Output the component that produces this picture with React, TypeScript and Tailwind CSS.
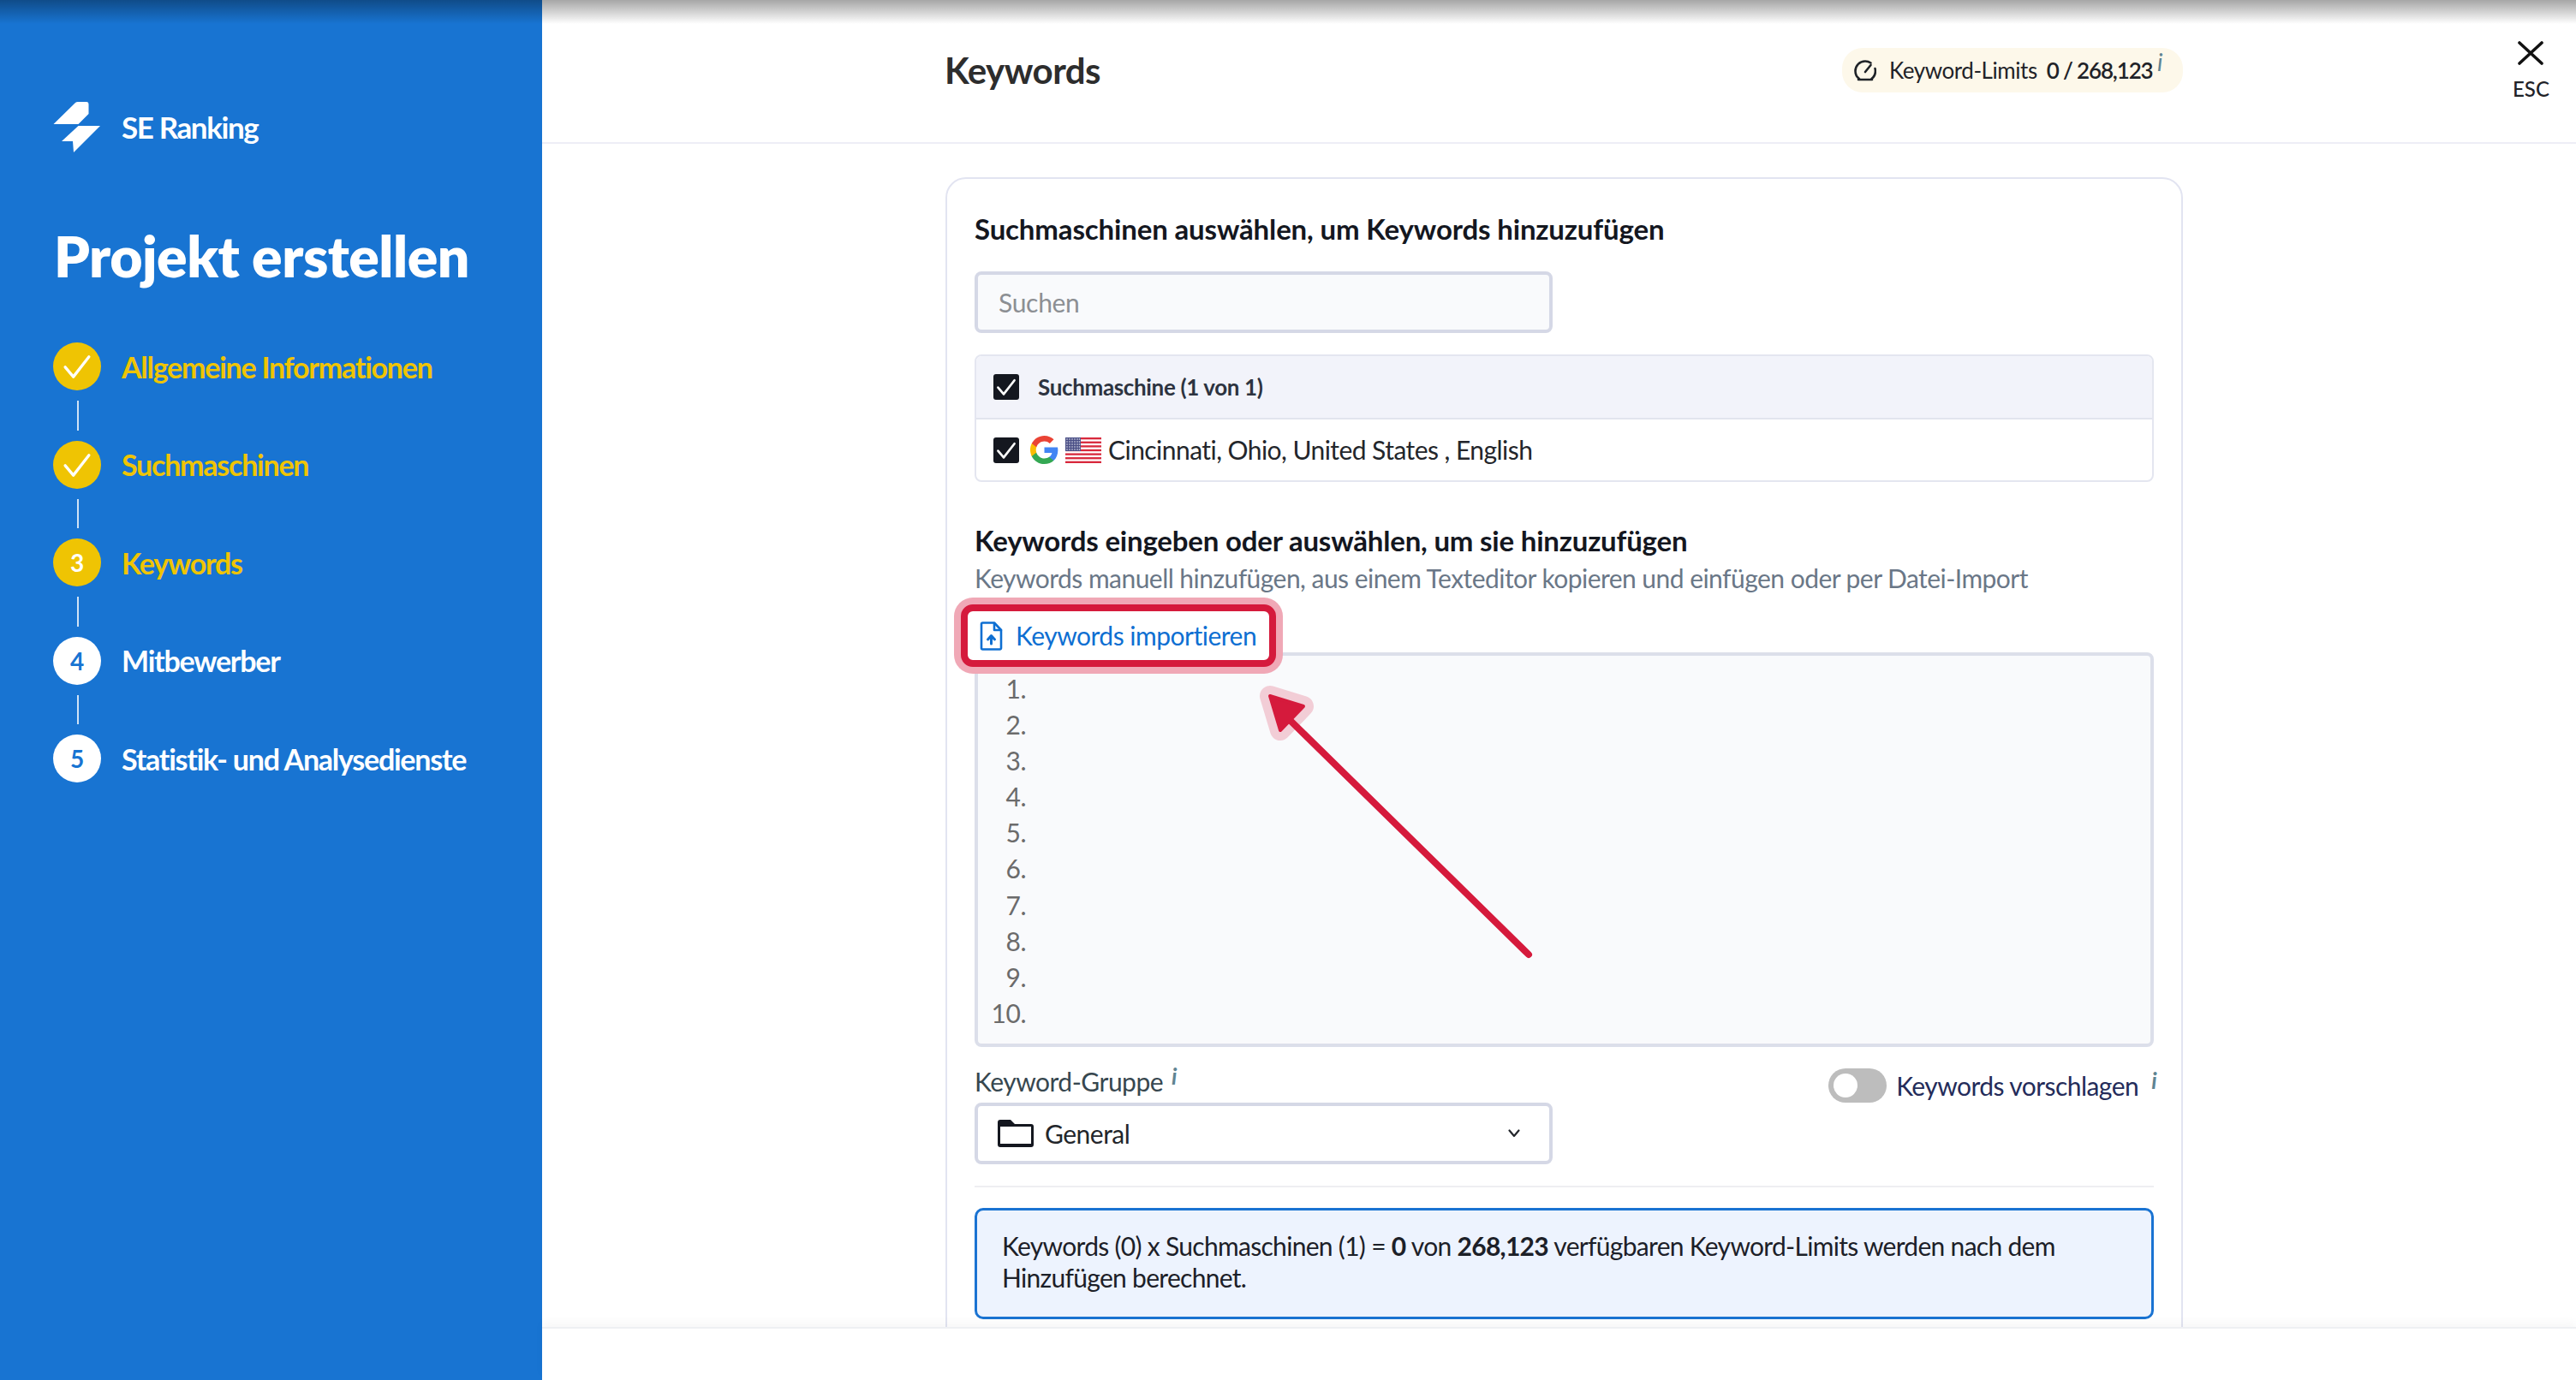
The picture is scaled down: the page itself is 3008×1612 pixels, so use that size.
import React from "react";

const Check = ({ size = 36, stroke = 2.2 }: { size?: number; stroke?: number }) => (
  <svg width={size} height={size} viewBox="0 0 30 30" fill="none" className="shrink-0">
    <path d="M7 15.5l5.5 6.5L23 8.500" stroke="#fff" strokeWidth={stroke} strokeLinecap="round" strokeLinejoin="round" />
  </svg>
);

const Box = () => (
  <span className="flex h-[30px] w-[30px] shrink-0 items-center justify-center rounded-[3px] bg-[#14171f]">
    <Check />
  </span>
);

const Info = ({ className }: { className: string }) => (
  <span className={"italic font-bold text-[#5f8492] " + className}>i</span>
);

const Step = ({ label, state, n, last }: { label: string; state: "done" | "current" | "todo"; n?: number; last?: boolean }) => (
  <div className="flex flex-col items-start">
    <div className="flex h-[56px] items-center gap-[24px]">
      <span
        className={
          "flex h-[56px] w-[56px] items-center justify-center rounded-full text-[28px] font-bold " +
          (state === "todo" ? "bg-white text-[#1874d2]" : "bg-[#efc403] text-white")
        }
      >
        {state === "done" ? <Check size={52} stroke={1.9} /> : n}
      </span>
      <span className={"text-[34px] font-bold tracking-[-1.25px] " + (state === "todo" ? "text-white" : "text-[#efc403]")}>{label}</span>
    </div>
    {!last && <span className="ml-[28px] mt-[12px] mb-[12px] block h-[34.5px] w-[2px] bg-[#cfe2f6]" />}
  </div>
);

const Flag = () => (
  <svg width="42" height="30" viewBox="0 0 42 30" className="shrink-0">
    <rect width="42" height="30" fill="#fff" />
    {[0, 2, 4, 6, 8, 10, 12].map((i) => (
      <rect key={i} y={(i * 30) / 13} width="42" height={30 / 13} fill="#d8283c" />
    ))}
    <rect width="18" height="16" fill="#4a4f86" />
    {[2, 5, 8, 11, 14].map((y) =>
      [2, 5, 8, 11, 14, 16.5].map((x) => <circle key={x + "-" + y} cx={x} cy={y} r="0.8" fill="#e8e8f2" />)
    )}
  </svg>
);

const GLogo = () => (
  <svg width="33" height="33" viewBox="1 1 22 22" className="shrink-0">
    <path fill="#4285F4" d="M22.56 12.25c0-.78-.07-1.53-.2-2.25H12v4.26h5.92c-.26 1.37-1.04 2.53-2.21 3.31v2.77h3.57c2.08-1.92 3.28-4.74 3.28-8.09z" />
    <path fill="#34A853" d="M12 23c2.97 0 5.46-.98 7.28-2.66l-3.57-2.77c-.98.66-2.23 1.06-3.71 1.06-2.86 0-5.29-1.93-6.16-4.53H2.18v2.84C3.99 20.53 7.7 23 12 23z" />
    <path fill="#FBBC05" d="M5.84 14.09c-.22-.66-.35-1.36-.35-2.09s.13-1.43.35-2.09V7.07H2.18C1.43 8.55 1 10.22 1 12s.43 3.45 1.18 4.93l2.85-2.22.81-.62z" />
    <path fill="#EA4335" d="M12 5.38c1.62 0 3.06.56 4.21 1.64l3.15-3.15C17.45 2.09 14.97 1 12 1 7.7 1 3.99 3.47 2.18 7.07l3.66 2.84c.87-2.6 3.3-4.53 6.16-4.53z" />
  </svg>
);

export default function App() {
  return (
    <div className="relative flex h-[1612px] w-[3008px] overflow-hidden bg-white font-['Lato',sans-serif]">
      {/* sidebar */}
      <aside className="flex h-full w-[633px] shrink-0 flex-col bg-[#1874d2] pl-[62px] pt-[118px]">
        <div className="flex h-[60px] items-center gap-[24px]">
          <svg width="56" height="60" viewBox="62 118 56 60" fill="#fff">
            <path d="M62.5 145 L88 120 Q89 119 91 119 L101 119 Q103.5 119 103.5 122 L103.5 133 L91.5 145 Z" />
            <path d="M117 147 L86 178 L85 165 L72 165 L91.5 147 Z" />
          </svg>
          <span className="text-[35px] font-bold tracking-[-1.4px] text-white">SE Ranking</span>
        </div>
        <h1 className="mt-[81px] ml-[1px] h-[80px] text-[66px] font-extrabold leading-[80px] tracking-[-0.5px] text-white">Projekt erstellen</h1>
        <div className="mt-[61px] flex flex-col">
          <Step label="Allgemeine Informationen" state="done" />
          <Step label="Suchmaschinen" state="done" />
          <Step label="Keywords" state="current" n={3} />
          <Step label="Mitbewerber" state="todo" n={4} />
          <Step label="Statistik- und Analysedienste" state="todo" n={5} last />
        </div>
      </aside>

      {/* main */}
      <main className="flex h-full min-w-0 flex-1 flex-col">
        <header className="flex h-[168px] shrink-0 items-start border-b-2 border-[#eeeef6] pl-[471px]">
          <div className="flex h-[166px] w-[1445px] items-center justify-between pb-[1px]">
            <h2 className="ml-[-1px] text-[42px] font-bold tracking-[-0.5px] text-[#2d2d2d]">Keywords</h2>
            <div className="relative mb-[1px] flex h-[52px] w-[398px] items-center rounded-[24px] bg-[#fdf8ea] pl-[14px] text-[26px] text-[#1f2328]">
              <svg width="26" height="26" viewBox="0 0 26 26" fill="none" stroke="#1f2328" strokeWidth="2.6" strokeLinecap="round" className="shrink-0">
                <path d="M6 23C3 20.8 1.5 17.5 1.500 14 1.500 7.500 6.500 2.500 13 2.500c3 0 5 1 6.500 2" />
                <path d="M24.500 11c.3 1 .4 2 .4 3 0 3.500-1.500 6.800-4.400 9" />
                <path d="M5 24h16" />
                <path d="M13 15L19.500 7" />
              </svg>
              <span className="ml-[15px] tracking-[-0.45px]">Keyword-Limits</span>
              <span className="ml-[11px] font-semibold tracking-[-1.15px]">0 / 268,123</span>
              <Info className="absolute left-[368px] top-[2px] text-[28px] leading-none font-normal" />
            </div>
          </div>
          <div className="ml-[385px] mt-[48px] flex flex-col items-center">
            <svg width="30" height="28" viewBox="0 0 30 28" fill="none" stroke="#111" strokeWidth="3.6" strokeLinecap="round">
              <path d="M2 2l26 24M28 2L2 26" />
            </svg>
            <span className="mt-[16px] text-[24px] font-medium leading-[24px] text-[#1f2328]">ESC</span>
          </div>
        </header>

        <div className="h-[1382px] shrink-0 overflow-hidden pl-[471px] pt-[39px]">
          <section className="h-[1500px] w-[1445px] rounded-t-[24px] border-2 border-[#e2e4f1] px-[32px] pt-[38px] text-[#23262b]">
            <h3 className="h-[40px] text-[33px] font-bold leading-[40px] tracking-[-0.15px] text-[#14171f]">Suchmaschinen auswählen, um Keywords hinzuzufügen</h3>
            <div className="mt-[30px] flex h-[72px] w-[675px] items-center rounded-[8px] border-4 border-[#d5d8e6] bg-[#f9fafc] pl-[24px] text-[30px] tracking-[-0.3px] text-[#8c8f93]">Suchen</div>

            <div className="mt-[25px] h-[149px] overflow-hidden rounded-[8px] border-2 border-[#e4e6f0]">
              <div className="flex h-[74px] items-center gap-[22px] border-b-2 border-[#e2e4ee] bg-[#f2f3fa] pl-[20px] text-[26px] font-bold tracking-[-0.35px] text-[#2d3340]">
                <Box />
                <span>Suchmaschine (1 von 1)</span>
              </div>
              <div className="flex h-[71px] items-center pl-[20px] text-[30px] tracking-[-0.55px]">
                <Box />
                <span className="ml-[13px]"><GLogo /></span>
                <span className="ml-[8px]"><Flag /></span>
                <span className="ml-[8px]">Cincinnati, Ohio, United States , English</span>
              </div>
            </div>

            <h3 className="mt-[48px] h-[40px] text-[33px] font-bold leading-[40px] tracking-[-0.2px] text-[#14171f]">Keywords eingeben oder auswählen, um sie hinzuzufügen</h3>
            <p className="mt-[6px] h-[36px] text-[30px] leading-[36px] tracking-[-0.54px] text-[#6a7787]">Keywords manuell hinzufügen, aus einem Texteditor kopieren und einfügen oder per Datei-Import</p>

            <div className="relative z-10 mb-[-17px] ml-[-16px] mt-[13px] flex h-[73px] w-[368px] items-center rounded-[14px] border-[8px] border-[#d51a3c] bg-white pl-[14px] text-[30px] tracking-[-0.5px] text-[#0e6fd2] shadow-[0_0_0_8px_#f0a8b6]">
              <svg width="27" height="34" viewBox="0 0 27 34" fill="none" stroke="#0e6fd2" strokeWidth="2.6" strokeLinejoin="round" strokeLinecap="round" className="shrink-0">
                <path d="M2 3a1.500 1.500 0 0 1 1.500-1.500H17L25 10v21a1.500 1.500 0 0 1-1.500 1.500h-20A1.500 1.500 0 0 1 2 31Z" />
                <path d="M17 2v8h8" />
                <path d="M13.500 26v-9M9.500 21l4-4.500 4 4.500" strokeWidth="3" />
              </svg>
              <span className="ml-[15px]">Keywords importieren</span>
            </div>

            <div className="h-[461px] rounded-[8px] border-4 border-[#dcdfea] bg-[#f9fafc] pt-[17px]">
              <div className="flex w-[56px] flex-col text-right text-[30px] leading-[42.1px] tracking-[-0.5px] text-[#6b6b6b]">
                {[1, 2, 3, 4, 5, 6, 7, 8, 9, 10].map((n) => (
                  <span key={n}>{n}.</span>
                ))}
              </div>
            </div>

            <div className="mt-[25px] flex items-start justify-between">
              <div className="flex h-[40px] items-center pb-[10px] text-[30px] tracking-[-0.5px] text-[#37474f]">
                Keyword-Gruppe
                <Info className="ml-[10px] mb-[12px] text-[26px] leading-none" />
              </div>
              <div className="flex h-[40px] items-center text-[30px] tracking-[-0.55px] text-[#242c5a]">
                <span className="relative mr-[11px] block h-[40px] w-[68px] rounded-[20px] bg-[#bdbdbd]">
                  <span className="absolute left-[6px] top-[6px] block h-[28px] w-[28px] rounded-full bg-white" />
                </span>
                Keywords vorschlagen
                <Info className="ml-[15px] mb-[12px] mr-[-3px] text-[26px] leading-none" />
              </div>
            </div>

            <div className="flex h-[72px] w-[675px] items-center rounded-[8px] border-4 border-[#d5d8e6] bg-white pl-[23px] pr-[34px] text-[30px] tracking-[-0.5px] text-[#23262b]">
              <svg width="42" height="32" viewBox="0 0 42 32" className="shrink-0">
                <path fillRule="evenodd" fill="#14171f" d="M0 3a3 3 0 0 1 3-3h12l5 5h19a3 3 0 0 1 3 3v21a3 3 0 0 1-3 3H3a3 3 0 0 1-3-3ZM3 8v20h36V8Z" />
              </svg>
              <span className="ml-[13px] flex-1">General</span>
              <svg width="14" height="10" viewBox="0 0 14 10" fill="none" stroke="#23262b" strokeWidth="2.2" strokeLinecap="round" strokeLinejoin="round">
                <path d="M1.500 1.500L7 8l5.500-6.500" />
              </svg>
            </div>

            <div className="mt-[25px] h-[2px] bg-[#eeeef2]" />

            <div className="mt-[24px] h-[130px] rounded-[10px] border-[3px] border-[#1a73d2] bg-[#edf3fe] px-[29px] pt-[23px] text-[30px] leading-[37px] tracking-[-0.7px] text-[#1c2028]">
              Keywords (0) x Suchmaschinen (1) = <b>0</b> von <b>268,123</b> verfügbaren Keyword-Limits werden nach dem
              <br />
              Hinzufügen berechnet.
            </div>
          </section>
        </div>

        <footer className="relative flex-1 border-t-2 border-[#eef0f3] bg-white shadow-[0_-6px_10px_rgba(0,0,0,0.03)]" />
      </main>

      {/* annotation arrow lying over the form */}
      <svg className="pointer-events-none absolute left-0 top-0" width="3008" height="1612" fill="none">
        <path d="M1483 813L1522 825L1495 853Z" fill="#f2cdd6" stroke="#f2cdd6" strokeWidth="24" strokeLinejoin="round" />
        <path d="M1505 840L1785 1115" stroke="#d51a3c" strokeWidth="8" strokeLinecap="round" />
        <path d="M1483 813L1522 825L1495 853Z" fill="#d51a3c" stroke="#d51a3c" strokeWidth="4" strokeLinejoin="round" />
      </svg>

      {/* shadow along the top edge */}
      <div className="pointer-events-none absolute left-0 top-0 h-[28px] w-full bg-gradient-to-b from-[#00000059] to-transparent" />
    </div>
  );
}
